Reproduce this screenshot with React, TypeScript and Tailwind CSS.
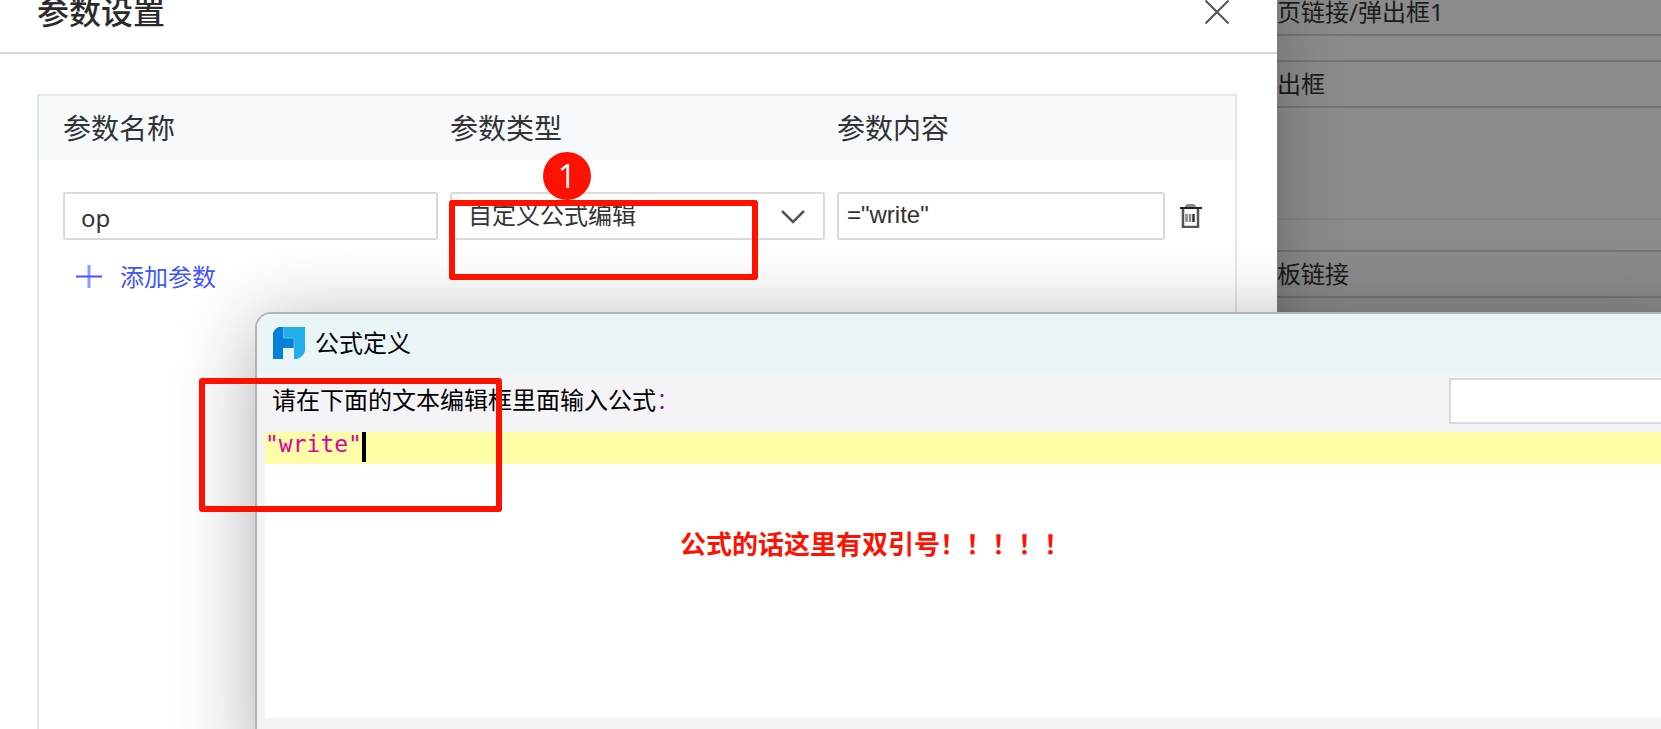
import { useState } from "react";

const PAGE_FONT = "font-['Noto_Sans','Noto_Sans_CJK_SC',sans-serif]";
const FIELD =
  "h-12 w-full rounded-[3px] border-2 border-[#d9d9d9] bg-transparent text-2xl text-[#333] outline-none";

function CloseIcon() {
  return (
    <svg viewBox="0 0 24 24" className="h-6 w-6" fill="none" stroke="#555" strokeWidth="2">
      <path d="M0.5 0.5 23.5 23.5M23.5 0.5 0.5 23.5" />
    </svg>
  );
}

function TrashIcon() {
  return (
    <svg viewBox="0 0 24 24" className="h-6 w-6" fill="none">
      <path d="M6 3V2L8 0H15L17 2V3Z" fill="#8a8a8a" />
      <path d="M1 4H23" stroke="#222" strokeWidth="2" />
      <path d="M4 5V23H19V5" stroke="#555" strokeWidth="2.5" />
      <path d="M7.5 10V18M11 10V18" stroke="#888" strokeWidth="2.5" />
      <path d="M14.5 10V18" stroke="#333" strokeWidth="2.5" />
    </svg>
  );
}

function LogoIcon() {
  return (
    <svg viewBox="0 0 32 32" className="h-8 w-8">
      <path d="M11 0H32V24Q30 30 24 32H21V11H11Z" fill="#22aee8" />
      <path d="M6 0H10V11H21V21H10V32H0V6Q2 1 6 0Z" fill="#0680d9" />
      <path d="M10.5 0V11H21V21" fill="none" stroke="#5dbdec" strokeWidth="1" />
    </svg>
  );
}

// The page behind the dialog, seen through the mask
function MaskedForm() {
  const field =
    "h-12 w-full border-y-2 border-[#757575] bg-transparent pb-1 text-2xl text-[#1c1c1c] outline-none";
  return (
    <aside className="w-[384px] shrink-0 bg-[#8b8b8b]">
      <div className="-mt-3 flex flex-col">
        <input aria-label="链接名称" className={field} defaultValue="页链接/弹出框1" />
        <input aria-label="链接类型" className={`${field} mt-6`} defaultValue="出框" />
        <hr className="mt-[110px] border-t-2 border-[#818181]" />
        <input aria-label="模板链接" className={`${field} mt-[30px]`} defaultValue="板链接" />
      </div>
    </aside>
  );
}

function ParamDialog() {
  return (
    <section className="relative flex min-w-0 flex-1 flex-col bg-white shadow-[0_0_64px_rgba(0,0,0,0.24)]">
      <header className="flex h-[54px] items-start justify-between border-b-2 border-[#d9d9d9] pr-12 pl-[37px]">
        <h1 className="text-[32px] leading-6 font-medium text-[#2b2b2b]">参数设置</h1>
        <button type="button" aria-label="关闭">
          <CloseIcon />
        </button>
      </header>

      <div className="flex flex-1 flex-col px-10 pt-10 pl-[37px]">
        <div className="flex-1 border-2 border-b-0 border-[#e6e6ed]">
          <div className="grid h-16 grid-cols-[375fr_375fr_328fr_58px] items-center gap-3 bg-[#f6fafd] pl-6 text-[28px] text-[#333]">
            <label htmlFor="param-name">参数名称</label>
            <label htmlFor="param-type">参数类型</label>
            <label htmlFor="param-value">参数内容</label>
          </div>

          <div className="mt-8 grid grid-cols-[375fr_375fr_328fr_58px] items-center gap-3 pl-6">
            <input id="param-name" className={`${FIELD} pt-0.5 pl-4`} defaultValue="op" />
            <div className="relative">
              <select id="param-type" className={`${FIELD} appearance-none pb-0.5 pl-4`}>
                <option>自定义公式编辑</option>
              </select>
              <svg
                viewBox="0 0 24 14"
                className="pointer-events-none absolute top-[18px] right-5 h-[14px] w-6"
                fill="none"
                stroke="#555"
                strokeWidth="2.5"
              >
                <path d="M1 1 12 12 23 1" />
              </svg>
            </div>
            <input
              id="param-value"
              className={`${FIELD} pb-0.5 pl-2 font-['Liberation_Sans',sans-serif]`}
              defaultValue={'="write"'}
            />
            <button type="button" aria-label="删除" className="w-7 px-[2px]">
              <TrashIcon />
            </button>
          </div>

          <button
            type="button"
            className="mt-[23px] flex items-center gap-[18px] pl-[37px] text-2xl leading-7 text-[#4255ff]"
          >
            <svg viewBox="0 0 26 24" className="h-6 w-[26px]" fill="none" stroke="currentColor">
              <path d="M0 11.5H26" strokeWidth="2" />
              <path d="M13 0V23" strokeWidth="3" opacity="0.6" />
            </svg>
            添加参数
          </button>
        </div>
      </div>
    </section>
  );
}

function FormulaWindow() {
  const [formula, setFormula] = useState('"write"');
  return (
    <section className="absolute top-[312px] -right-10 -bottom-10 left-[255px] flex flex-col overflow-hidden rounded-tl-2xl border-2 border-[#b3b3b3] bg-[#f4f4f7] pb-[49px] shadow-[0_12px_80px_rgba(0,0,0,0.32)]">
      <header className="flex h-[60px] shrink-0 items-center gap-2.5 bg-[#eaf5f8] pb-0.5 pl-4">
        <LogoIcon />
        <h2 className="text-2xl text-black">公式定义</h2>
      </header>
      <div className="flex h-[58px] shrink-0 items-start justify-between pt-1 pl-[15px]">
        <label htmlFor="formula" className="text-2xl leading-[44px] text-black">
          请在下面的文本编辑框里面输入公式<span className="font-light text-[#6b1a7a]">：</span>
        </label>
        <input
          aria-label="搜索"
          className="h-[46px] w-[250px] border-2 border-[#dadadc] bg-white px-3 text-2xl outline-none"
        />
      </div>
      <div className="ml-2 flex-1 bg-white">
        <div className="flex h-8 items-start bg-[#fffea8]">
          <input
            id="formula"
            className="h-[30px] [field-sizing:content] pb-1.5 font-['DejaVu_Sans_Mono',monospace] text-[23px] text-[#e0009b] outline-none"
            value={formula}
            onChange={(e) => setFormula(e.target.value)}
          />
          <span className="h-[30px] w-1 bg-black" />
        </div>
      </div>
    </section>
  );
}

// Red marks drawn over the windows
function Annotations() {
  return (
    <div className="pointer-events-none absolute inset-0">
      <div className="absolute top-[200px] left-[449px] h-20 w-[309px] rounded-[3px] border-6 border-[#ff1100]" />
      <div className="absolute top-[152px] left-[543px] flex h-12 w-12 items-center justify-center rounded-full bg-[#ff1100] font-['Open_Sans',sans-serif] text-[32px] leading-none text-white">
        1
      </div>
      <div className="absolute top-[378px] left-[199px] h-[134px] w-[303px] rounded-[3px] border-6 border-[#ff1100]" />
      <p className="absolute top-[528px] left-[680px] text-[26px] leading-8 font-bold whitespace-nowrap text-[#ff1100]">
        公式的话这里有双引号！！！！！
      </p>
    </div>
  );
}

export default function App() {
  return (
    <main lang="zh-CN" className={`relative flex min-h-screen overflow-hidden ${PAGE_FONT}`}>
      <ParamDialog />
      <MaskedForm />
      <FormulaWindow />
      <Annotations />
    </main>
  );
}
